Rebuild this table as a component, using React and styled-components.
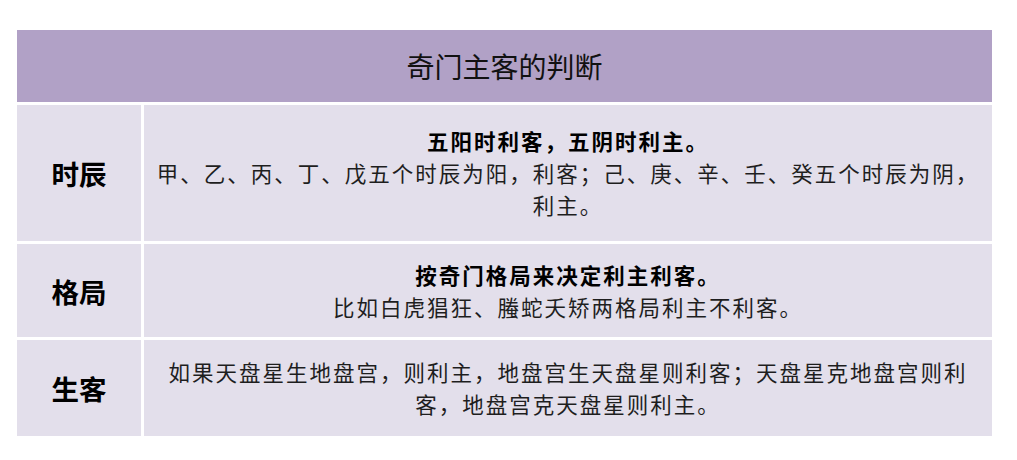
import { Fragment } from "react";
import styled, { createGlobalStyle } from "styled-components";

const GlobalStyle = createGlobalStyle`
  body {
    margin: 0;
    background: #ffffff;
    font-family: "Noto Sans CJK SC", "Noto Sans", sans-serif;
  }
`;

const Page = styled.div`
  width: 1017px;
  height: 460px;
  padding: 30px 0 0 17px;
  box-sizing: border-box;
`;

const Table = styled.div`
  width: 975px;
  display: grid;
  grid-template-columns: 124px 1fr;
  grid-template-rows: 72px 136px 93px 96px;
  gap: 3px;
`;

const Header = styled.div`
  grid-column: 1 / span 2;
  background: #b1a1c6;
  display: flex;
  align-items: center;
  justify-content: center;
  font-size: 28px;
  color: #111;
`;

const Label = styled.div`
  background: #e3dfeb;
  display: flex;
  align-items: center;
  justify-content: center;
  font-size: 27.5px;
  font-weight: 700;
  color: #000;
`;

const Cell = styled.div`
  background: #e3dfeb;
  display: flex;
  flex-direction: column;
  align-items: center;
  justify-content: center;
  padding: 0 4px;
  text-align: center;
  font-size: 21.5px;
  letter-spacing: 2px;
  line-height: 32px;
  color: #1e1e1e;
`;

const Title = styled.div`
  font-weight: 700;
  color: #000;
`;

const Text = styled.div`
  font-weight: 400;
`;

const rows = [
  {
    label: "时辰",
    title: "五阳时利客，五阴时利主。",
    lines: ["甲、乙、丙、丁、戊五个时辰为阳，利客；己、庚、辛、壬、癸五个时辰为阴，", "利主。"],
  },
  {
    label: "格局",
    title: "按奇门格局来决定利主利客。",
    lines: ["比如白虎猖狂、螣蛇夭矫两格局利主不利客。"],
  },
  {
    label: "生客",
    lines: ["如果天盘星生地盘宫，则利主，地盘宫生天盘星则利客；天盘星克地盘宫则利", "客，地盘宫克天盘星则利主。"],
  },
];

export default function App() {
  return (
    <>
      <GlobalStyle />
      <Page>
        <Table>
          <Header>奇门主客的判断</Header>
          {rows.map((row) => (
            <Fragment key={row.label}>
              <Label>{row.label}</Label>
              <Cell>
                {row.title && <Title>{row.title}</Title>}
                {row.lines.map((line, i) => (
                  <Text key={i}>{line}</Text>
                ))}
              </Cell>
            </Fragment>
          ))}
        </Table>
      </Page>
    </>
  );
}
